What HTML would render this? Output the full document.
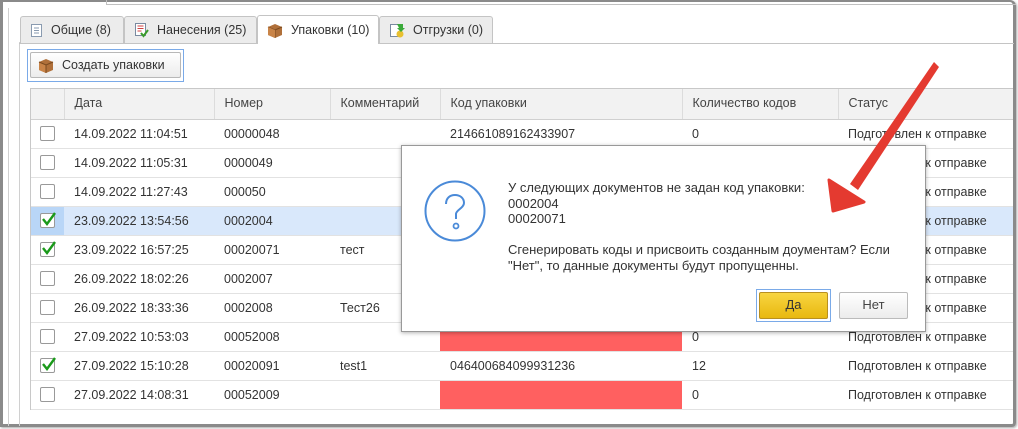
<!DOCTYPE html>
<html><head><meta charset="utf-8"><style>
*{margin:0;padding:0;box-sizing:border-box}
body{width:1018px;height:429px;overflow:hidden;background:#fff;font-family:"Liberation Sans",Arial,sans-serif;font-size:12.5px;color:#333;position:relative}
.abs{position:absolute}
.frame{left:0;top:0;width:1016px;height:427px;border:3px solid #8a8a8a;border-top-width:2px;border-radius:0 6px 4px 0;box-shadow:1px 1px 2px #aaa}
.tab{position:absolute;top:16px;height:27px;background:#ececec;border:1px solid #c4c4c4;border-bottom:none;border-radius:3px 3px 0 0;display:flex;align-items:center;padding-left:9px;white-space:nowrap;color:#333}
.tab.act{background:#fff;top:15px;height:29px;z-index:2}
.tab svg{margin-right:8px}
table{position:absolute;left:30px;top:88px;width:983px;border-collapse:collapse;table-layout:fixed}
td,th{height:29px;border-bottom:1px solid #e2e2e2;text-align:left;font-weight:normal;padding-left:10px;white-space:nowrap;overflow:hidden}
th{background:#f2f2f2;border-right:1px solid #dcdcdc;border-bottom:1px solid #d0d0d0;height:31px;color:#444}
tr.sel td{background:#d9e8fb}
tr.sel td:first-child{background:#b9d6f7}
.cb{display:inline-block;width:15px;height:15px;border:1px solid #999;border-radius:2px;background:#fff;vertical-align:middle;position:relative}
.red{background:#ff6060}
.dlg{left:401px;top:145px;width:525px;height:187px;background:#fff;border:1px solid #999;box-shadow:0 1px 4px rgba(0,0,0,.3)}
.btn{position:absolute;border-radius:2px;text-align:center;line-height:24px;font-size:13px}
</style></head><body>
<div class="abs frame"></div>
<div class="abs" style="left:8px;top:8px;width:1px;height:418px;background:#d0d0d0"></div>
<div class="abs" style="left:19px;top:42px;width:1px;height:384px;background:#d0d0d0"></div>
<div class="abs" style="left:106px;top:4px;width:910px;height:1px;background:#c0c0c0"></div>
<div class="abs" style="left:106px;top:0;width:1px;height:5px;background:#c0c0c0"></div>
<div class="abs" style="left:19px;top:43px;width:995px;height:1px;background:#c4c4c4"></div>

<div class="tab" style="left:20px;width:104px"><svg width="13" height="15"><rect x="1.5" y="1.5" width="10" height="12" fill="#fff" stroke="#8a9bb0"/><path d="M4 5h5M4 7.5h5M4 10h5" stroke="#8a9bb0"/></svg>Общие (8)</div>
<div class="tab" style="left:124px;width:133px"><svg width="15" height="16"><rect x="1.5" y="1.5" width="10" height="12" fill="#fff" stroke="#7a8aa0"/><path d="M3.5 4h6M3.5 6.5h6M3.5 9h4" stroke="#d04040"/><path d="M7 11l2.5 3 4.5-6" stroke="#3a9a2a" stroke-width="2" fill="none"/></svg>Нанесения (25)</div>
<div class="tab act" style="left:257px;width:122px"><svg width="16" height="15"><path d="M8 1l7 3v8l-7 3-7-3V4z" fill="#b0703a"/><path d="M1 4l7 3 7-3M8 7v8" stroke="#7a4a20" fill="none"/><path d="M1 4l7 3v8l-7-3z" fill="#c98448"/></svg>Упаковки (10)</div>
<div class="tab" style="left:379px;width:114px"><svg width="16" height="16"><rect x="1.5" y="2.5" width="10" height="12" fill="#fff" stroke="#7a8aa0"/><circle cx="11" cy="12" r="3.5" fill="#e8c030"/><path d="M8 2h6v4h2l-4 4-4-4h2z" fill="#3aaa3a"/></svg>Отгрузки (0)</div>

<div class="abs" style="left:27px;top:49px;width:157px;height:33px;border:1px solid #7aaae8"></div>
<div class="abs" style="left:30px;top:52px;width:151px;height:26px;border:1px solid #b8b8b8;border-radius:2px;background:linear-gradient(#fff,#ececec);display:flex;align-items:center;padding-left:7px;color:#333"><svg width="16" height="15" style="margin-right:8px"><path d="M8 1l7 3v8l-7 3-7-3V4z" fill="#b0703a"/><path d="M1 4l7 3v8l-7-3z" fill="#c98448"/><path d="M1 4l7 3 7-3M8 7v8" stroke="#7a4a20" fill="none"/></svg>Создать упаковки</div>

<table>
<colgroup><col style="width:34px"><col style="width:150px"><col style="width:116px"><col style="width:110px"><col style="width:242px"><col style="width:156px"><col></colgroup>
<tr><th></th><th>Дата</th><th>Номер</th><th>Комментарий</th><th>Код упаковки</th><th>Количество кодов</th><th style="border-right:none">Статус</th></tr>
<tr><td><span class="cb"></span></td><td>14.09.2022 11:04:51</td><td>00000048</td><td></td><td>214661089162433907</td><td>0</td><td>Подготовлен к отправке</td></tr>
<tr><td><span class="cb"></span></td><td>14.09.2022 11:05:31</td><td>0000049</td><td></td><td></td><td></td><td>Подготовлен к отправке</td></tr>
<tr><td><span class="cb"></span></td><td>14.09.2022 11:27:43</td><td>000050</td><td></td><td></td><td></td><td>Подготовлен к отправке</td></tr>
<tr class="sel"><td><span class="cb"><svg class="abs" style="left:0;top:-3px" width="16" height="16"><path d="M2 8l4 5 8-11" stroke="#1a9a1a" stroke-width="2.4" fill="none"/></svg></span></td><td>23.09.2022 13:54:56</td><td>0002004</td><td></td><td></td><td></td><td>Подготовлен к отправке</td></tr>
<tr><td><span class="cb"><svg class="abs" style="left:0;top:-3px" width="16" height="16"><path d="M2 8l4 5 8-11" stroke="#1a9a1a" stroke-width="2.4" fill="none"/></svg></span></td><td>23.09.2022 16:57:25</td><td>00020071</td><td>тест</td><td></td><td></td><td>Подготовлен к отправке</td></tr>
<tr><td><span class="cb"></span></td><td>26.09.2022 18:02:26</td><td>0002007</td><td></td><td></td><td></td><td>Подготовлен к отправке</td></tr>
<tr><td><span class="cb"></span></td><td>26.09.2022 18:33:36</td><td>0002008</td><td>Тест26</td><td></td><td></td><td>Подготовлен к отправке</td></tr>
<tr><td><span class="cb"></span></td><td>27.09.2022 10:53:03</td><td>00052008</td><td></td><td class="red"></td><td>0</td><td>Подготовлен к отправке</td></tr>
<tr><td><span class="cb"><svg class="abs" style="left:0;top:-3px" width="16" height="16"><path d="M2 8l4 5 8-11" stroke="#1a9a1a" stroke-width="2.4" fill="none"/></svg></span></td><td>27.09.2022 15:10:28</td><td>00020091</td><td>test1</td><td>046400684099931236</td><td>12</td><td>Подготовлен к отправке</td></tr>
<tr><td><span class="cb"></span></td><td>27.09.2022 14:08:31</td><td>00052009</td><td></td><td class="red"></td><td>0</td><td>Подготовлен к отправке</td></tr>
</table>
<div class="abs" style="left:30px;top:88px;width:1px;height:322px;background:#c8c8c8"></div>
<div class="abs" style="left:30px;top:88px;width:983px;height:1px;background:#c8c8c8"></div>

<div class="abs dlg">
 <svg class="abs" style="left:22px;top:34px" width="64" height="64"><circle cx="31" cy="31" r="29.5" fill="none" stroke="#4a8ad8" stroke-width="2"/><path d="M22 24c0-6 4-9 9-9s9 3 9 8c0 5-8 7-8 11v5" fill="none" stroke="#4a8ad8" stroke-width="2"/><circle cx="32" cy="46" r="2.5" fill="none" stroke="#4a8ad8" stroke-width="1.8"/></svg>
 <div class="abs" style="left:106px;top:34px;line-height:15.5px;font-size:13px;color:#333">У следующих документов не задан код упаковки:<br>0002004<br>00020071<br><br>Сгенерировать коды и присвоить созданным доументам? Если<br>"Нет", то данные документы будут пропущенны.</div>
 <div class="abs" style="left:354px;top:143px;width:75px;height:33px;border:1px solid #7aaae8"></div>
 <div class="btn" style="left:357px;top:146px;width:69px;height:27px;background:linear-gradient(#f8d540,#e8b810);border:1px solid #b89020;color:#333">Да</div>
 <div class="btn" style="left:437px;top:146px;width:69px;height:27px;background:linear-gradient(#fff,#ececec);border:1px solid #bbb;color:#444">Нет</div>
</div>

<svg class="abs" style="left:0;top:0" width="1018" height="429"><path d="M934 62 L939 67 L858 190 L850 184 Z" fill="#e43a30"/><path d="M833 211 L829 180 L864 202 Z" fill="#e43a30" stroke="#e43a30" stroke-width="3" stroke-linejoin="round"/></svg>
</body></html>
